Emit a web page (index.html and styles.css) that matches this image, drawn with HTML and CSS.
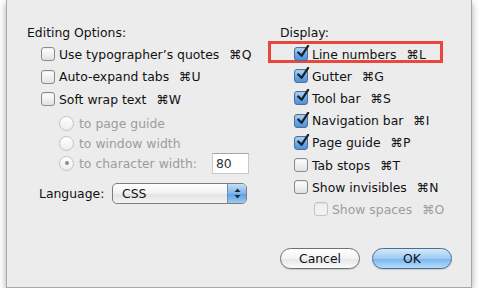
FILE: index.html
```html
<!DOCTYPE html>
<html lang="en">
<head>
    <meta charset="UTF-8">
    <title>Preferences</title>
    <link rel="stylesheet" href="styles.css">
</head>
<body>
    <div class="sheet">
        <div class="columns">
            <div class="col left">
                <div class="heading">Editing Options:</div>
                <div class="group checks">
                    <div class="row"><span class="cb"></span>Use typographer’s quotes<span class="key">⌘Q</span></div>
                    <div class="row"><span class="cb"></span>Auto-expand tabs<span class="key">⌘U</span></div>
                    <div class="row"><span class="cb"></span>Soft wrap text<span class="key">⌘W</span></div>
                </div>
                <div class="group radios">
                    <div class="radio-row disabled"><span class="rb"></span>to page guide</div>
                    <div class="radio-row disabled"><span class="rb"></span>to window width</div>
                    <div class="radio-row disabled"><span class="rb on"></span>to character width:<span class="field">80</span></div>
                </div>
                <div class="lang-row">
                    <span class="lang-label">Language:</span>
                    <div class="popup">
                        <span class="popup-value">CSS</span>
                        <span class="popup-arrows">
                            <svg width="7" height="11" viewBox="0 0 7 11">
                                <path d="M3.5 0.5 L6.5 4 L0.5 4 Z" fill="#1d2a3a"/>
                                <path d="M3.5 10.5 L6.5 7 L0.5 7 Z" fill="#1d2a3a"/>
                            </svg>
                        </span>
                    </div>
                </div>
            </div>

            <div class="col right">
                <div class="heading">Display:</div>
                <div class="group checks">
                    <div class="row highlight"><span class="cb on"><svg viewBox="0 0 16 16"><path d="M3.5 8 L7 11.5 L14 1" /></svg></span>Line numbers<span class="key">⌘L</span></div>
                    <div class="row"><span class="cb on"><svg viewBox="0 0 16 16"><path d="M3.5 8 L7 11.5 L14 1" /></svg></span>Gutter<span class="key">⌘G</span></div>
                    <div class="row"><span class="cb on"><svg viewBox="0 0 16 16"><path d="M3.5 8 L7 11.5 L14 1" /></svg></span>Tool bar<span class="key">⌘S</span></div>
                    <div class="row"><span class="cb on"><svg viewBox="0 0 16 16"><path d="M3.5 8 L7 11.5 L14 1" /></svg></span>Navigation bar<span class="key">⌘I</span></div>
                    <div class="row"><span class="cb on"><svg viewBox="0 0 16 16"><path d="M3.5 8 L7 11.5 L14 1" /></svg></span>Page guide<span class="key">⌘P</span></div>
                    <div class="row"><span class="cb"></span>Tab stops<span class="key">⌘T</span></div>
                    <div class="row"><span class="cb"></span>Show invisibles<span class="key">⌘N</span></div>
                    <div class="row sub disabled"><span class="cb"></span>Show spaces<span class="key">⌘O</span></div>
                </div>
            </div>
        </div>

        <div class="buttons">
            <button class="btn">Cancel</button>
            <button class="btn default">OK</button>
        </div>
    </div>
</body>
</html>
```

FILE: styles.css
```css
body {
    margin: 0;
    padding: 0;
    background-color: #ffffff;
    font-family: "DejaVu Sans", "Liberation Sans", sans-serif;
    font-size: 12.4px;
    color: #111;
}

.sheet {
    margin-left: 6px;
    width: 464px;
    height: 287px;
    background-color: #ececec;
    border: 1px solid #a9a9a9;
    border-top: none;
    box-shadow: 0 3px 7px rgba(0, 0, 0, 0.35);
    display: flex;
    flex-direction: column;
}

.columns {
    display: grid;
    grid-template-columns: 253px 1fr;
    padding: 21px 0 0 20px;
}

.heading {
    height: 22px;
    display: flex;
    align-items: center;
}

.checks {
    padding-left: 14px;
}

.row {
    height: 22.2px;
    display: flex;
    align-items: center;
    position: relative;
}

.left .row {
    height: 22.5px;
}

.key {
    margin-left: 10px;
}

.disabled {
    color: #9c9c9c;
}

.row.sub {
    padding-left: 20px;
}

/* red box drawn over the first display option */
.highlight::before {
    content: "";
    position: absolute;
    left: -26px;
    top: -2px;
    width: 169px;
    height: 16px;
    border: 3px solid #e8473d;
}

.cb {
    width: 12px;
    height: 12px;
    margin-right: 4px;
    border: 1px solid #8a8a8a;
    border-radius: 3px;
    background: linear-gradient(#ffffff, #e2e2e2);
    box-shadow: inset 0 1px 1px rgba(0, 0, 0, 0.08);
    position: relative;
    flex: none;
}

.disabled .cb {
    border-color: #c4c4c4;
    background: #f1f1f1;
}

.cb.on {
    border-color: #4b6f96;
    background: linear-gradient(#b9d9f6, #6aa8e6 55%, #4e92dc);
}

.cb svg {
    position: absolute;
    left: 0;
    top: -3px;
    width: 15px;
    height: 15px;
    fill: none;
    stroke: #15202c;
    stroke-width: 2.4;
    stroke-linecap: round;
    stroke-linejoin: round;
}

.radios {
    padding-left: 32px;
    margin-top: 2.5px;
}

.radio-row {
    height: 20px;
    display: flex;
    align-items: center;
}

.rb {
    width: 13px;
    height: 13px;
    margin-right: 5px;
    border: 1px solid #c2c2c2;
    border-radius: 50%;
    background: linear-gradient(#ffffff, #eeeeee);
    position: relative;
    flex: none;
}

.rb.on::after {
    content: "";
    position: absolute;
    left: 4.5px;
    top: 4.5px;
    width: 4px;
    height: 4px;
    border-radius: 50%;
    background-color: #8e8e8e;
}

.field {
    margin-left: 15px;
    width: 32px;
    height: 19px;
    padding-left: 3px;
    display: flex;
    align-items: center;
    background-color: #ffffff;
    border: 1px solid #c9c9c9;
    border-top-color: #a6a6a6;
    color: #333;
}

.lang-row {
    margin-top: 9px;
    padding-left: 12px;
    height: 22px;
    display: flex;
    align-items: center;
}

.lang-label {
    width: 73px;
}

.popup {
    width: 133px;
    height: 19px;
    border: 1px solid #7d7d7d;
    border-radius: 5px;
    background: linear-gradient(#ffffff, #f1f1f1 50%, #e1e1e1 51%, #f4f4f4);
    display: flex;
    align-items: center;
    overflow: hidden;
}

.popup-value {
    flex: 1;
    padding-left: 9px;
}

.popup-arrows {
    width: 18px;
    height: 100%;
    display: flex;
    align-items: center;
    justify-content: center;
    border-left: 1px solid #6f8fb3;
    background: linear-gradient(#c5def6, #7eb4ea 50%, #5c9de4 51%, #9ccaf3);
}

.buttons {
    margin-top: auto;
    padding: 0 19px 18px 0;
    display: flex;
    justify-content: flex-end;
    gap: 12px;
}

.btn {
    width: 80px;
    height: 21px;
    padding: 0;
    font-family: "DejaVu Sans", "Liberation Sans", sans-serif;
    font-size: 12.4px;
    color: #111;
    border: 1px solid #707070;
    border-radius: 11px;
    background: linear-gradient(#ffffff, #f3f3f3 50%, #e4e4e4 51%, #fbfbfb);
    box-shadow: 0 1px 1px rgba(0, 0, 0, 0.15);
}

.btn.default {
    border-color: #4a6c91;
    background: linear-gradient(#d6e9fb, #9ccbf3 50%, #77b4ee 51%, #b3dcfa);
}
```
